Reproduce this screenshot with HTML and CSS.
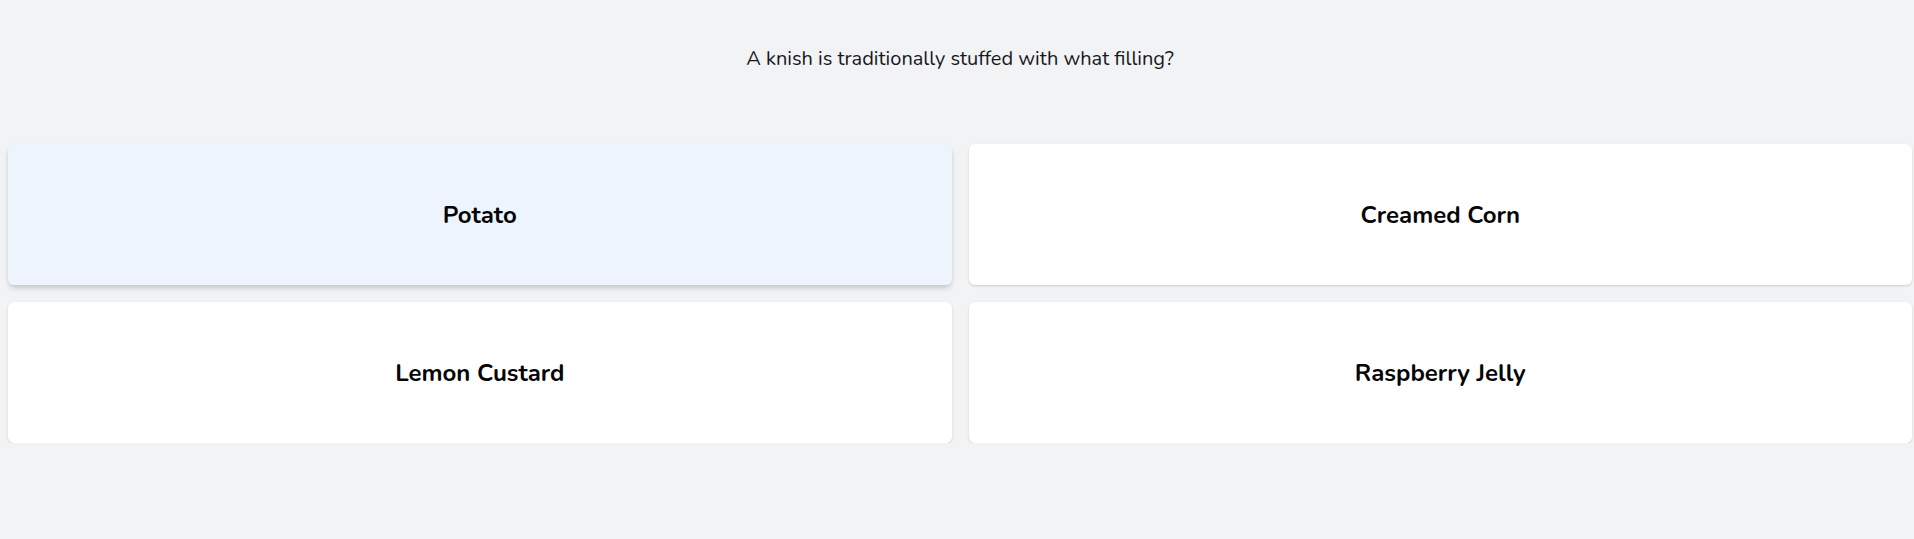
FILE: index.html
```html
<!DOCTYPE html>
<html lang="en">
<head>
<meta charset="utf-8">
<title>Quiz</title>
<link rel="stylesheet" href="styles.css">
</head>
<body>
<main class="quiz">
  <p class="question">A knish is traditionally stuffed with what filling?</p>
  <div class="answers">
    <button class="answer answer--active">Potato</button>
    <button class="answer">Creamed Corn</button>
    <button class="answer">Lemon Custard</button>
    <button class="answer">Raspberry Jelly</button>
  </div>
</main>
</body>
</html>
```

FILE: styles.css
```css
* { box-sizing: border-box; }
html, body {
  margin: 0;
  padding: 0;
  background: #f2f3f5;
  font-family: "Nunito", "Noto Sans", "Open Sans", sans-serif;
}
.quiz {
  display: flex;
  flex-direction: column;
  padding: 0 2px 0 8px;
}
.question {
  margin: 0;
  padding-top: 46px;
  height: 144px;
  text-align: center;
  font-size: 20px;
  line-height: 26px;
  color: #18181b;
}
.answers {
  display: grid;
  grid-template-columns: 1fr 1fr;
  grid-auto-rows: 141px;
  column-gap: 17px;
  row-gap: 17px;
}
.answer {
  border: none;
  border-radius: 6px;
  background: #ffffff;
  box-shadow: 0 1px 3px rgba(0,0,0,0.10), 0 1px 2px rgba(0,0,0,0.06);
  font-family: inherit;
  font-size: 24px;
  font-weight: 700;
  color: #050507;
  cursor: pointer;
}
.answer--active {
  background: #eef4fe;
  box-shadow: 0 4px 6px -1px rgba(0,0,0,0.15), 0 2px 4px -1px rgba(0,0,0,0.08);
}
```
